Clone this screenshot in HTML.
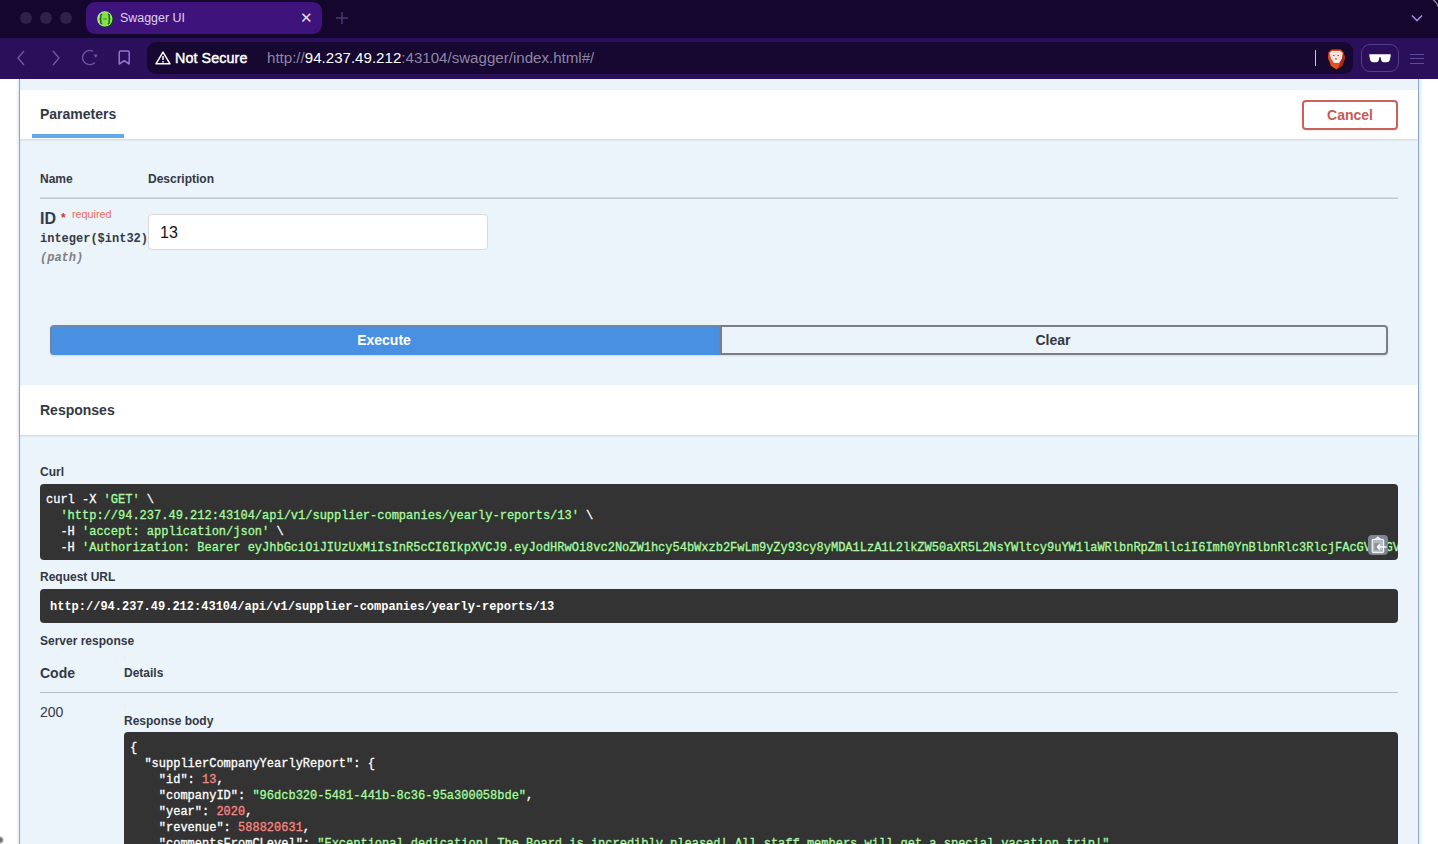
<!DOCTYPE html>
<html><head><meta charset="utf-8"><title>Swagger UI</title>
<style>
*{box-sizing:border-box;margin:0;padding:0}
html,body{width:1438px;height:844px;overflow:hidden;background:#fff;font-family:"Liberation Sans",sans-serif;color:#353a47}
.abs{position:absolute}
#tabbar{position:absolute;left:0;top:0;width:1438px;height:38px;background:#15062d}
#toolbar{position:absolute;left:0;top:38px;width:1438px;height:41px;background:#2a0f5a}
.dot{position:absolute;top:12px;width:12px;height:12px;border-radius:50%;background:#2e2247}
#tab{position:absolute;left:86px;top:2px;width:236px;height:32px;border-radius:9px;background:#3e137c}
#addr{position:absolute;left:147px;top:42px;width:1206px;height:32px;border-radius:9px;background:#160830}
#page{position:absolute;left:0;top:79px;width:1438px;height:765px;background:#fff;overflow:hidden}
#opblock{position:absolute;left:19px;top:-10px;width:1400px;height:900px;background:#ebf3fb;border-left:1px solid #9ba8b8;border-right:1px solid #90a9cc}
.sechdr{position:absolute;left:0;width:1398px;background:#fff;box-shadow:0 1px 2px rgba(0,0,0,.13)}
.h4{position:absolute;font-size:14px;font-weight:700;color:#333845;white-space:nowrap;line-height:16px}
.lbl{position:absolute;font-size:12px;font-weight:700;color:#333845;white-space:nowrap;line-height:14px}
.mono{font-family:"Liberation Mono",monospace}
.code{position:absolute;background:#333;border-radius:4px;overflow:hidden}
.code pre{font-family:"Liberation Mono",monospace;font-size:12px;font-weight:400;-webkit-text-stroke-width:0.3px;line-height:16px;color:#fff;white-space:pre}
.code pre.b{font-weight:700;-webkit-text-stroke-width:0}
.s{color:#b8f0b0;text-shadow:0.6px 0.6px 0.8px #075507,-0.4px 0.4px 0.8px #075507}
.n{color:#e0908c;text-shadow:0.6px 0.6px 0.8px #781c1c,-0.4px 0.4px 0.8px #781c1c}
</style></head>
<body>
<div id="tabbar">
  <div class="dot" style="left:20px"></div>
  <div class="dot" style="left:40px"></div>
  <div class="dot" style="left:60px"></div>
  <div id="tab">
    <svg class="abs" style="left:10px;top:8px" width="18" height="18" viewBox="0 0 18 18"><circle cx="9.5" cy="9.5" r="7.8" fill="#0f4a0a"/><circle cx="8.8" cy="8.8" r="7.6" fill="#cfe9c0"/><circle cx="9" cy="9" r="6.9" fill="#86e04c"/><path d="M6.2 4.2 Q4.6 4.2 4.8 6 L4.9 7.6 Q4.9 8.8 3.8 9 Q4.9 9.2 4.9 10.4 L4.8 12 Q4.6 13.8 6.2 13.8 M11.8 4.2 Q13.4 4.2 13.2 6 L13.1 7.6 Q13.1 8.8 14.2 9 Q13.1 9.2 13.1 10.4 L13.2 12 Q13.4 13.8 11.8 13.8" stroke="#135a10" stroke-width="1.3" fill="none"/><path d="M7 9 H11" stroke="#3aa020" stroke-width="1.2"/></svg>
    <div class="abs" style="left:34px;top:8px;font-size:12.45px;line-height:16px;color:#ddd2f2">Swagger UI</div>
    <div class="abs" style="left:214px;top:7px;font-size:15px;line-height:18px;color:#e4dbf4">&#x2715;</div>
  </div>
  <svg class="abs" style="left:335px;top:11px" width="14" height="14" viewBox="0 0 14 14"><path d="M7 1 V13 M1 7 H13" stroke="#4b3a72" stroke-width="1.4"/></svg>
  <svg class="abs" style="left:1428px;top:0" width="10" height="10" viewBox="0 0 10 10"><path d="M4 -1 Q8.5 1.5 10.5 7" stroke="#8f8d96" stroke-width="1.2" fill="none"/></svg>
  <div class="abs" style="left:1410px;top:11px;width:14px;height:14px;">
    <svg width="14" height="14" viewBox="0 0 14 14"><path d="M2 4.5 L7 9.5 L12 4.5" stroke="#a48ae0" stroke-width="1.6" fill="none"/></svg>
  </div>
</div>
<div id="toolbar">
  <svg class="abs" style="left:14px;top:10px" width="16" height="20" viewBox="0 0 16 20"><path d="M10 3 L4 10 L10 17" stroke="#6c58a8" stroke-width="1.4" fill="none"/></svg>
  <svg class="abs" style="left:47px;top:10px" width="16" height="20" viewBox="0 0 16 20"><path d="M6 3 L12 10 L6 17" stroke="#6c58a8" stroke-width="1.4" fill="none"/></svg>
  <svg class="abs" style="left:80px;top:10px" width="20" height="20" viewBox="0 0 20 20"><path d="M13.25 3.45 A7.1 7.1 0 1 0 14.8 14.5" stroke="#6c56aa" stroke-width="1.3" fill="none"/><path d="M13.6 6.4 L17.6 6.6 L15.8 10 Z" fill="#6c56aa"/></svg>
  <svg class="abs" style="left:116px;top:10px" width="16" height="20" viewBox="0 0 16 20"><path d="M3.2 16 V4.5 Q3.2 3 4.7 3 H11.7 Q13.2 3 13.2 4.5 V16 L8.2 12.7 Z" stroke="#8e78cf" stroke-width="1.5" fill="none" stroke-linejoin="round"/></svg>
</div>
<div id="addr">
  <svg class="abs" style="left:8px;top:9px" width="16" height="14" viewBox="0 0 16 14"><path d="M8 1.2 L15 12.8 H1 Z" stroke="#fff" stroke-width="1.5" fill="none" stroke-linejoin="round"/><path d="M8 5 V9" stroke="#fff" stroke-width="1.5"/><circle cx="8" cy="10.8" r="0.9" fill="#fff"/></svg>
  <div class="abs" style="left:28px;top:8px;font-size:14.3px;line-height:16px;color:#fff;-webkit-text-stroke:0.45px #fff;letter-spacing:0.1px">Not Secure</div>
  <div class="abs" style="left:120px;top:7px;font-size:15.1px;line-height:18px;color:#8f86a3;white-space:nowrap">http://<span style="color:#fff">94.237.49.212</span>:43104/swagger/index.html#/</div>
  <div class="abs" style="left:1168px;top:8px;width:1px;height:16px;background:#cdc6d8"></div>
  <svg class="abs" style="left:1180px;top:7px" width="20" height="21" viewBox="0 0 20 21"><path d="M1.5 3.5 L4.5 0.5 H13.5 L16.5 3.5 L18 9 L15 17 L9.5 20.5 L4 17 L1 9 Z" fill="#e2521f"/><path d="M16.5 3.5 L18 9 L15 17 L9.5 20.5 L12 17 L15 9 Z" fill="#a82a10"/><path d="M2.5 4 L5 2 H13 L15.5 4 L15 9.5 L12 14 H7 L4 9.5 Z" fill="#f6e0dc"/><path d="M6 6.5 h1.5 M10.5 6.5 h1.5 M9 9 v2" stroke="#8a5a50" stroke-width="1"/><path d="M7.5 12 H11.5" stroke="#fff" stroke-width="1.5"/></svg>
</div>
<div class="abs" style="left:1361px;top:44px;width:38px;height:28px;border:1px solid #54408a;border-radius:9px"></div>
<svg class="abs" style="left:1369px;top:54px" width="22" height="9" viewBox="0 0 22 9"><path d="M0.3 0.3 H21.7 V2 L20.8 6 Q20.3 8.2 17.8 8.2 H14.8 Q12.6 8.2 12.1 6 L11.6 3.3 Q11 2.7 10.4 3.3 L9.9 6 Q9.4 8.2 7.2 8.2 H4.2 Q1.7 8.2 1.2 6 L0.3 2 Z" fill="#fff"/></svg>
<div class="abs" style="left:1410px;top:53.5px;width:14px;height:1.2px;background:#5f4c9c"></div>
<div class="abs" style="left:1410px;top:58px;width:14px;height:1.2px;background:#5f4c9c"></div>
<div class="abs" style="left:1410px;top:62.5px;width:14px;height:1.2px;background:#5f4c9c"></div>

<div id="page">
 <div class="abs" style="left:1419px;top:0;width:3px;height:765px;background:linear-gradient(90deg,#d6ecfd,#f4faff)"></div>
 <div class="abs" style="left:16px;top:0;width:3px;height:765px;background:linear-gradient(90deg,#fff,#e6e8ee)"></div>
 <div class="abs" style="left:-4px;top:757px;width:8px;height:8px;border-radius:50%;background:radial-gradient(circle,#555 0,#888 40%,rgba(255,255,255,0) 75%)"></div>
 <div id="opblock">
  <div class="abs" style="left:0;top:0;width:2px;height:900px;background:linear-gradient(90deg,#d9f0ff,#ebf3fb)"></div>
  <!-- parameters header: page y 90..139 => opblock y 21..70 -->
  <div class="sechdr" style="top:21px;height:49px">
    <div class="h4" style="left:20px;top:16px">Parameters</div>
    <div class="abs" style="left:12px;top:44px;width:92px;height:4px;background:#62a8ec"></div>
    <div class="abs" style="left:1282px;top:10px;width:96px;height:30px;border:2px solid #c8625d;border-radius:4px;box-shadow:0 1px 2px rgba(0,0,0,.1)"><div class="h4" style="left:0;width:92px;text-align:center;top:5px;color:#c65a55">Cancel</div></div>
  </div>
  <!-- table header -->
  <div class="lbl" style="left:20px;top:103px">Name</div>
  <div class="lbl" style="left:128px;top:103px">Description</div>
  <div class="abs" style="left:20px;top:128px;width:1358px;height:2px;border-top:1px solid #d6dce5;background:#c2c9d4"></div>
  <div class="abs" style="left:20px;top:141px;font-size:16px;font-weight:700;line-height:18px">ID</div>
  <div class="abs" style="left:41px;top:143px;font-size:12px;line-height:12px;font-weight:700;color:#d8382a">*</div><div class="abs" style="left:52px;top:139px;font-size:10.8px;line-height:12px;color:#ef6a62">required</div>
  <div class="abs mono" style="left:20px;top:162px;font-size:12px;font-weight:700;line-height:16px">integer($int32)</div>
  <div class="abs mono" style="left:20px;top:181px;font-size:12px;font-weight:700;font-style:italic;line-height:16px;color:#808080">(path)</div>
  <div class="abs" style="left:128px;top:145px;width:340px;height:36px;background:#fff;border:1px solid #d9d9d9;border-radius:4px"><div class="abs" style="left:11px;top:9px;font-size:16px;line-height:18px;color:#111">13</div></div>
  <!-- buttons: page y 325..355 => opblock y 246..276 -->
  <div class="abs" style="left:30px;top:256px;width:670px;height:30px;background:#4a90e2;border-radius:4px 0 0 4px;border-top:2px solid #6c8ab0;border-left:2px solid #6b84a6;box-shadow:0 1px 2px rgba(0,0,0,.1)"><div class="h4" style="left:-2px;width:668px;text-align:center;top:5px;color:#fff">Execute</div></div>
  <div class="abs" style="left:700px;top:256px;width:668px;height:30px;border:2px solid #7b7e85;border-radius:0 4px 4px 0;box-shadow:0 1px 2px rgba(0,0,0,.1)"><div class="h4" style="left:-1px;width:664px;text-align:center;top:5px">Clear</div></div>
  <!-- responses header: page 385..435 => 306..356 -->
  <div class="sechdr" style="top:316px;height:50px">
    <div class="h4" style="left:20px;top:17px">Responses</div>
  </div>
  <div class="lbl" style="left:20px;top:396px">Curl</div>
  <div class="code" style="left:20px;top:415px;width:1358px;height:76px">
<pre style="position:absolute;left:6px;top:8px">curl -X <span class="s">'GET'</span> \
  <span class="s">'http://94.237.49.212:43104/api/v1/supplier-companies/yearly-reports/13'</span> \
  -H <span class="s">'accept: application/json'</span> \
  -H <span class="s">'Authorization: Bearer eyJhbGciOiJIUzUxMiIsInR5cCI6IkpXVCJ9.eyJodHRwOi8vc2NoZW1hcy54bWxzb2FwLm9yZy93cy8yMDA1LzA1L2lkZW50aXR5L2NsYWltcy9uYW1laWRlbnRpZmllciI6Imh0YnBlbnRlc3RlcjFAcGVudGVzdGVyLmh0YiIsImh0dHA6Ly9zY2hlbWFzLnhtbHNvYXAub3JnL3dzLzIwMDU'</span></pre>
    <div class="abs" style="left:1328px;top:51px;width:20px;height:20px;background:#7d8492;border-radius:4px">
      <svg width="20" height="20" viewBox="0 0 20 20"><rect x="4.2" y="4.3" width="11.4" height="13.2" rx="1.3" fill="#b4b8c0" stroke="#f2f2f4" stroke-width="1.3"/><path d="M7.2 4.6 L9.9 2.2 L12.6 4.6" stroke="#f2f2f4" stroke-width="1.3" fill="#d8dadf"/><rect x="6.3" y="8" width="5" height="7" fill="#8d929c"/><path d="M9.3 12 H18.6 M9.3 12 L11.9 9.4 M9.3 12 L11.9 14.6" stroke="#fafafa" stroke-width="1.6" fill="none"/></svg>
    </div>
  </div>
  <div class="lbl" style="left:20px;top:501px">Request URL</div>
  <div class="code" style="left:20px;top:520px;width:1358px;height:34px">
<pre class="b" style="position:absolute;left:10px;top:10px">http://94.237.49.212:43104/api/v1/supplier-companies/yearly-reports/13</pre>
  </div>
  <div class="lbl" style="left:20px;top:565px">Server response</div>
  <div class="h4" style="left:20px;top:596px">Code</div>
  <div class="lbl" style="left:104px;top:597px">Details</div>
  <div class="abs" style="left:20px;top:623px;width:1358px;height:1px;background:#b7bfcb"></div>
  <div class="abs" style="left:20px;top:635px;font-size:14px;line-height:16px">200</div>
  <div class="lbl" style="left:104px;top:645px">Response body</div>
  <div class="code" style="left:104px;top:663px;width:1274px;height:300px">
<pre style="position:absolute;left:6px;top:8px">{
  "supplierCompanyYearlyReport": {
    "id": <span class="n">13</span>,
    "companyID": <span class="s">"96dcb320-5481-441b-8c36-95a300058bde"</span>,
    "year": <span class="n">2020</span>,
    "revenue": <span class="n">588820631</span>,
    "commentsFromCLevel": <span class="s">"Exceptional dedication! The Board is incredibly pleased! All staff members will get a special vacation trip!"</span>,
    "publishDate": <span class="s">"2021-01-01T00:00:00"</span></pre>
  </div>
 </div>
</div>
</body></html>
